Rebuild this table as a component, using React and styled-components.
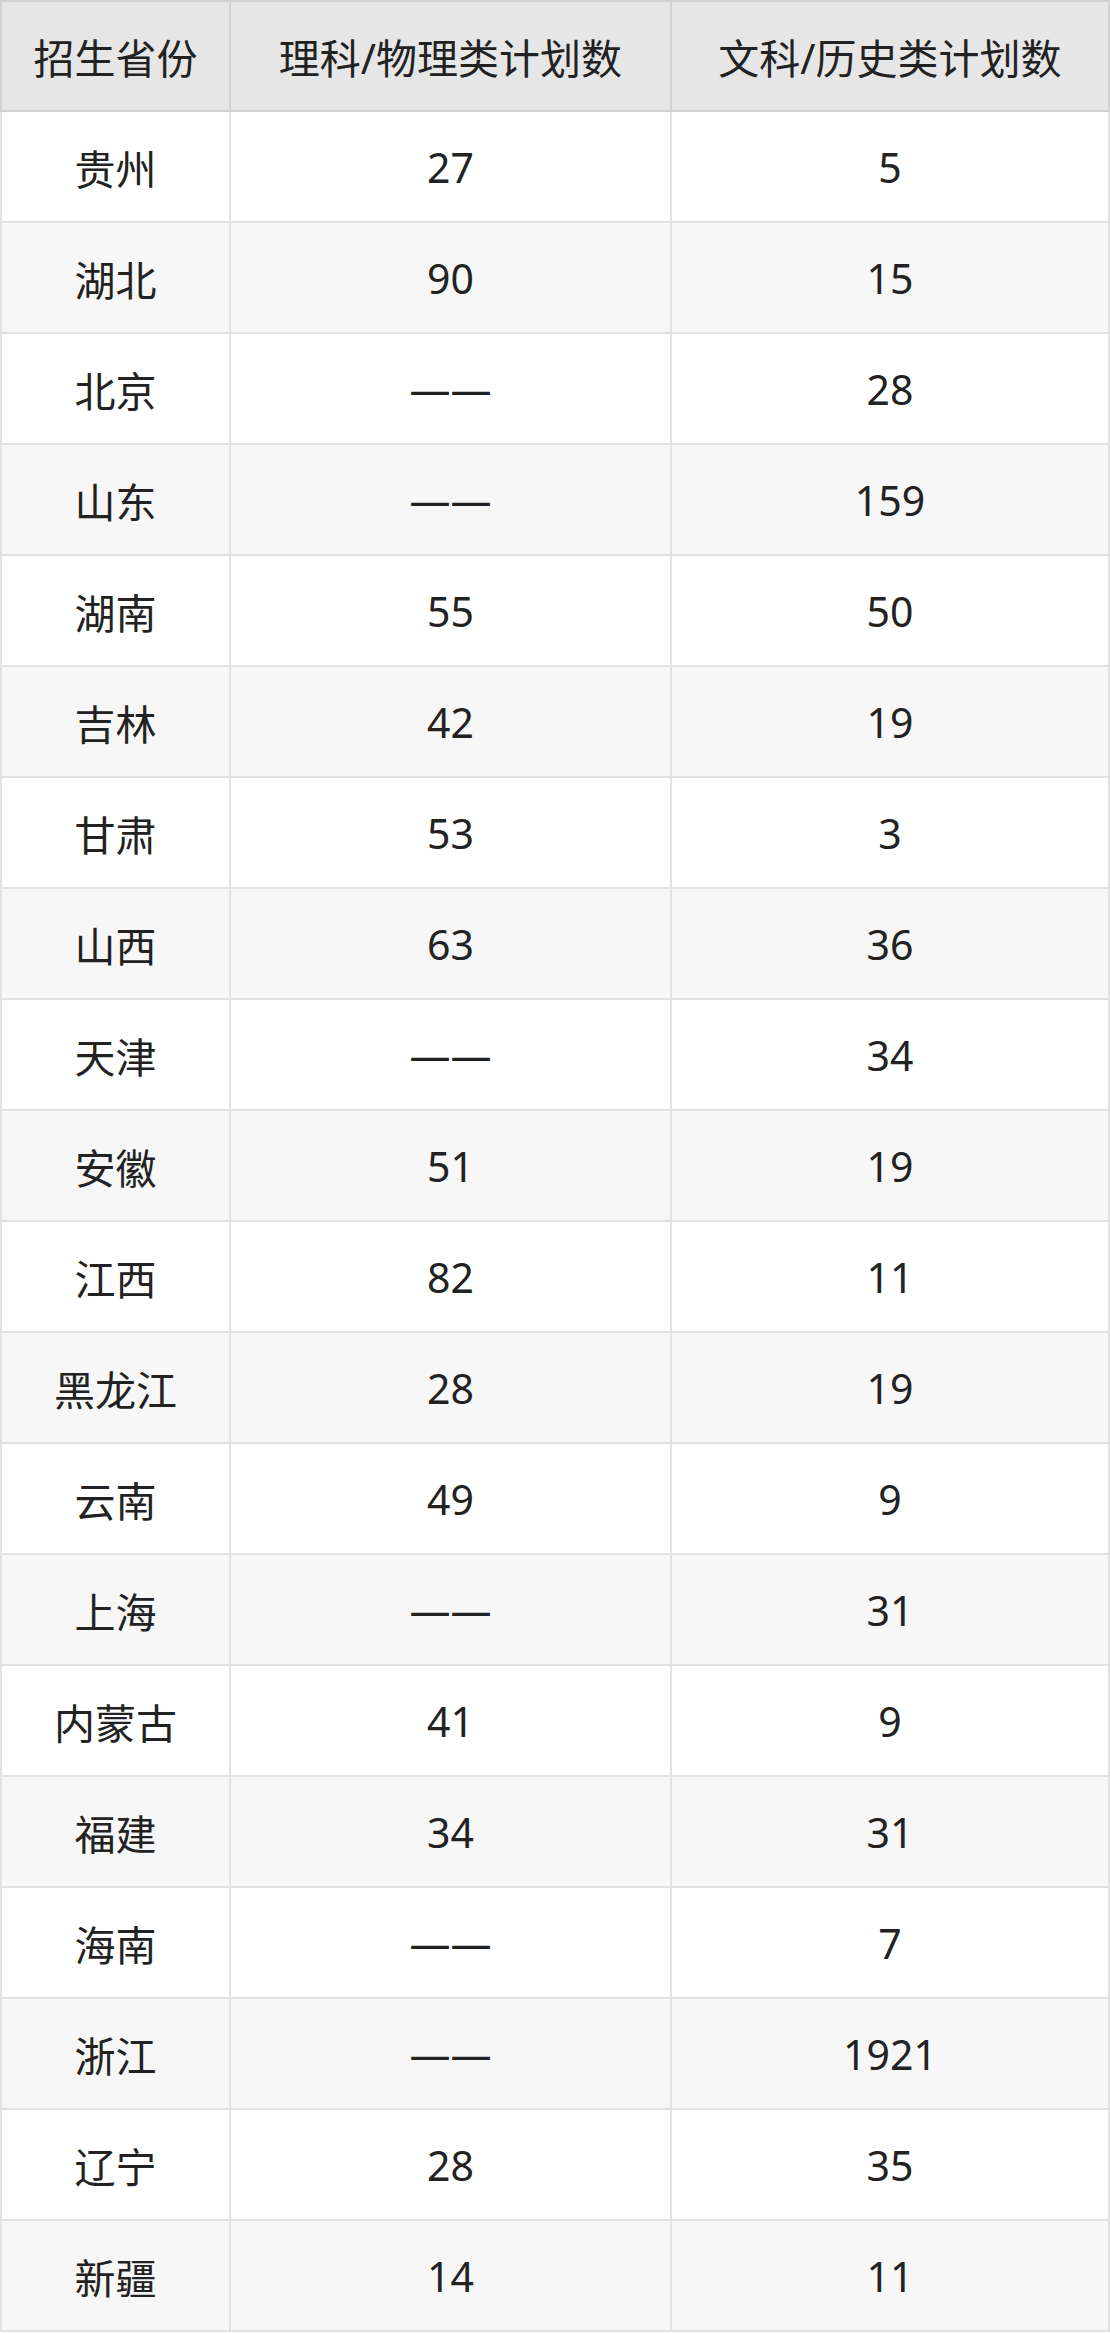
import React from "react";
import styled, { createGlobalStyle } from "styled-components";

const GlobalStyle = createGlobalStyle`
  html, body {
    margin: 0;
    padding: 0;
    background: #ffffff;
  }
  body {
    font-family: "Noto Sans", "Open Sans", "Noto Sans CJK SC", sans-serif;
    color: #222222;
  }
`;

const Table = styled.table`
  width: 1110px;
  border-collapse: collapse;
  table-layout: fixed;
  border: 2px solid #d6d6d6;
`;

const HeadCell = styled.th`
  height: 108px;
  padding: 0;
  background: #e6e6e6;
  border: 2px solid #d2d2d2;
  font-size: 41px;
  font-weight: 400;
  text-align: center;
  vertical-align: middle;
`;

const Row = styled.tr`
  background: ${(p) => (p.$striped ? "#f7f7f7" : "#ffffff")};
`;

const Cell = styled.td`
  height: 109px;
  padding: 0;
  border: 2px solid #e2e2e2;
  font-size: 41px;
  text-align: center;
  vertical-align: middle;
`;

const rows = [
  ["贵州", "27", "5"],
  ["湖北", "90", "15"],
  ["北京", "——", "28"],
  ["山东", "——", "159"],
  ["湖南", "55", "50"],
  ["吉林", "42", "19"],
  ["甘肃", "53", "3"],
  ["山西", "63", "36"],
  ["天津", "——", "34"],
  ["安徽", "51", "19"],
  ["江西", "82", "11"],
  ["黑龙江", "28", "19"],
  ["云南", "49", "9"],
  ["上海", "——", "31"],
  ["内蒙古", "41", "9"],
  ["福建", "34", "31"],
  ["海南", "——", "7"],
  ["浙江", "——", "1921"],
  ["辽宁", "28", "35"],
  ["新疆", "14", "11"],
];

export default function App() {
  return (
    <>
      <GlobalStyle />
      <Table>
        <colgroup>
          <col style={{ width: "229px" }} />
          <col style={{ width: "441px" }} />
          <col />
        </colgroup>
        <thead>
          <tr>
            <HeadCell>招生省份</HeadCell>
            <HeadCell>理科/物理类计划数</HeadCell>
            <HeadCell>文科/历史类计划数</HeadCell>
          </tr>
        </thead>
        <tbody>
          {rows.map(([prov, sci, arts], i) => (
            <Row key={prov} $striped={i % 2 === 1}>
              <Cell>{prov}</Cell>
              <Cell>{sci}</Cell>
              <Cell>{arts}</Cell>
            </Row>
          ))}
        </tbody>
      </Table>
    </>
  );
}
